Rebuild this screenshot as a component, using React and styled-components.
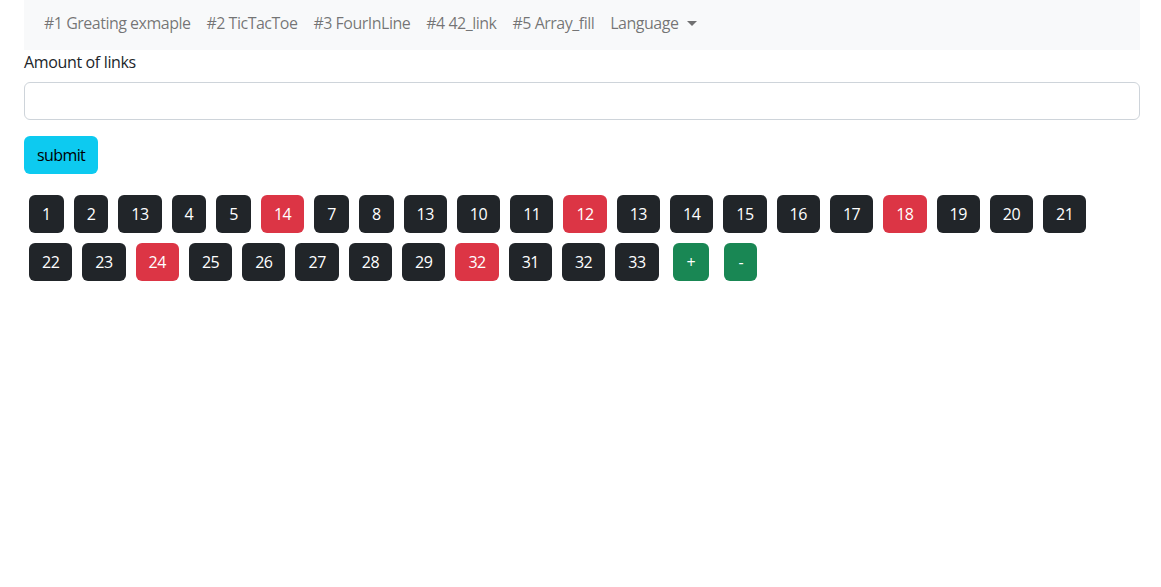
import React from 'react'
import styled, { createGlobalStyle } from 'styled-components'

const GlobalStyle = createGlobalStyle`
  body {
    margin: 0;
    background: #fff;
    color: #212529;
    font-family: "Open Sans", "Noto Sans", sans-serif;
    font-size: 16px;
    line-height: 1.5;
    letter-spacing: -0.35px;
  }
`;

const links = ['#1 Greating exmaple', '#2 TicTacToe', '#3 FourInLine', '#4 42_link', '#5 Array_fill'];

const numbers = [
  [1, 0], [2, 0], [13, 0], [4, 0], [5, 0], [14, 1], [7, 0], [8, 0], [13, 0], [10, 0],
  [11, 0], [12, 1], [13, 0], [14, 0], [15, 0], [16, 0], [17, 0], [18, 1], [19, 0], [20, 0],
  [21, 0], [22, 0], [23, 0], [24, 1], [25, 0], [26, 0], [27, 0], [28, 0], [29, 0], [32, 1],
  [31, 0], [32, 0], [33, 0],
];

function App() {
  return (
    <Page>
      <GlobalStyle />
      <NavBar>
        {links.map((l) => (
          <NavLink key={l}>{l}</NavLink>
        ))}
        <NavLink>
          Language<Caret />
        </NavLink>
      </NavBar>
      <Label>Amount of links</Label>
      <Input />
      <Submit>submit</Submit>
      <Grid>
        {numbers.map(([n, red], i) => (
          <NumButton key={i} $red={red}>{n}</NumButton>
        ))}
        <StepButton>+</StepButton>
        <StepButton>-</StepButton>
      </Grid>
    </Page>
  )
}

const Page = styled.div`
  width: 1116px;
  margin: 0 0 0 24px;
`;

const NavBar = styled.nav`
  height: 50px;
  background: #f8f9fa;
  display: flex;
  align-items: center;
  padding: 0 12px 5px;
  box-sizing: border-box;
`;

const NavLink = styled.div`
  padding: 0 8px;
  color: rgba(0, 0, 0, 0.55);
  display: flex;
  align-items: center;
  white-space: nowrap;
  letter-spacing: -0.5px;
`;

const Caret = styled.span`
  display: inline-block;
  margin-left: 9px;
  margin-top: 1px;
  border-top: 5px solid rgba(0, 0, 0, 0.55);
  border-left: 5px solid transparent;
  border-right: 5px solid transparent;
`;

const Label = styled.div`
  margin-bottom: 8px;
`;

const Input = styled.div`
  height: 38px;
  border: 1px solid #ced4da;
  border-radius: 6px;
  box-sizing: border-box;
`;

const Btn = styled.div`
  height: 38px;
  box-sizing: border-box;
  display: inline-flex;
  align-items: center;
  justify-content: center;
  padding: 0 12px;
  border: 1px solid transparent;
  border-radius: 6px;
`;

const Submit = styled(Btn)`
  margin-top: 16px;
  background: #0dcaf0;
  color: #000;
  letter-spacing: -0.6px;
`;

const Grid = styled.div`
  display: flex;
  flex-wrap: wrap;
  margin-top: 16px;
`;

const NumButton = styled(Btn)`
  margin: 5px;
  background: ${(p) => (p.$red ? '#dc3545' : '#212529')};
  color: #fff;
  letter-spacing: -0.5px;
`;

const StepButton = styled(Btn)`
  margin: 5px 6px 5px 9px;
  padding: 0 13px;
  background: #198754;
  color: #fff;
`;

export default App
